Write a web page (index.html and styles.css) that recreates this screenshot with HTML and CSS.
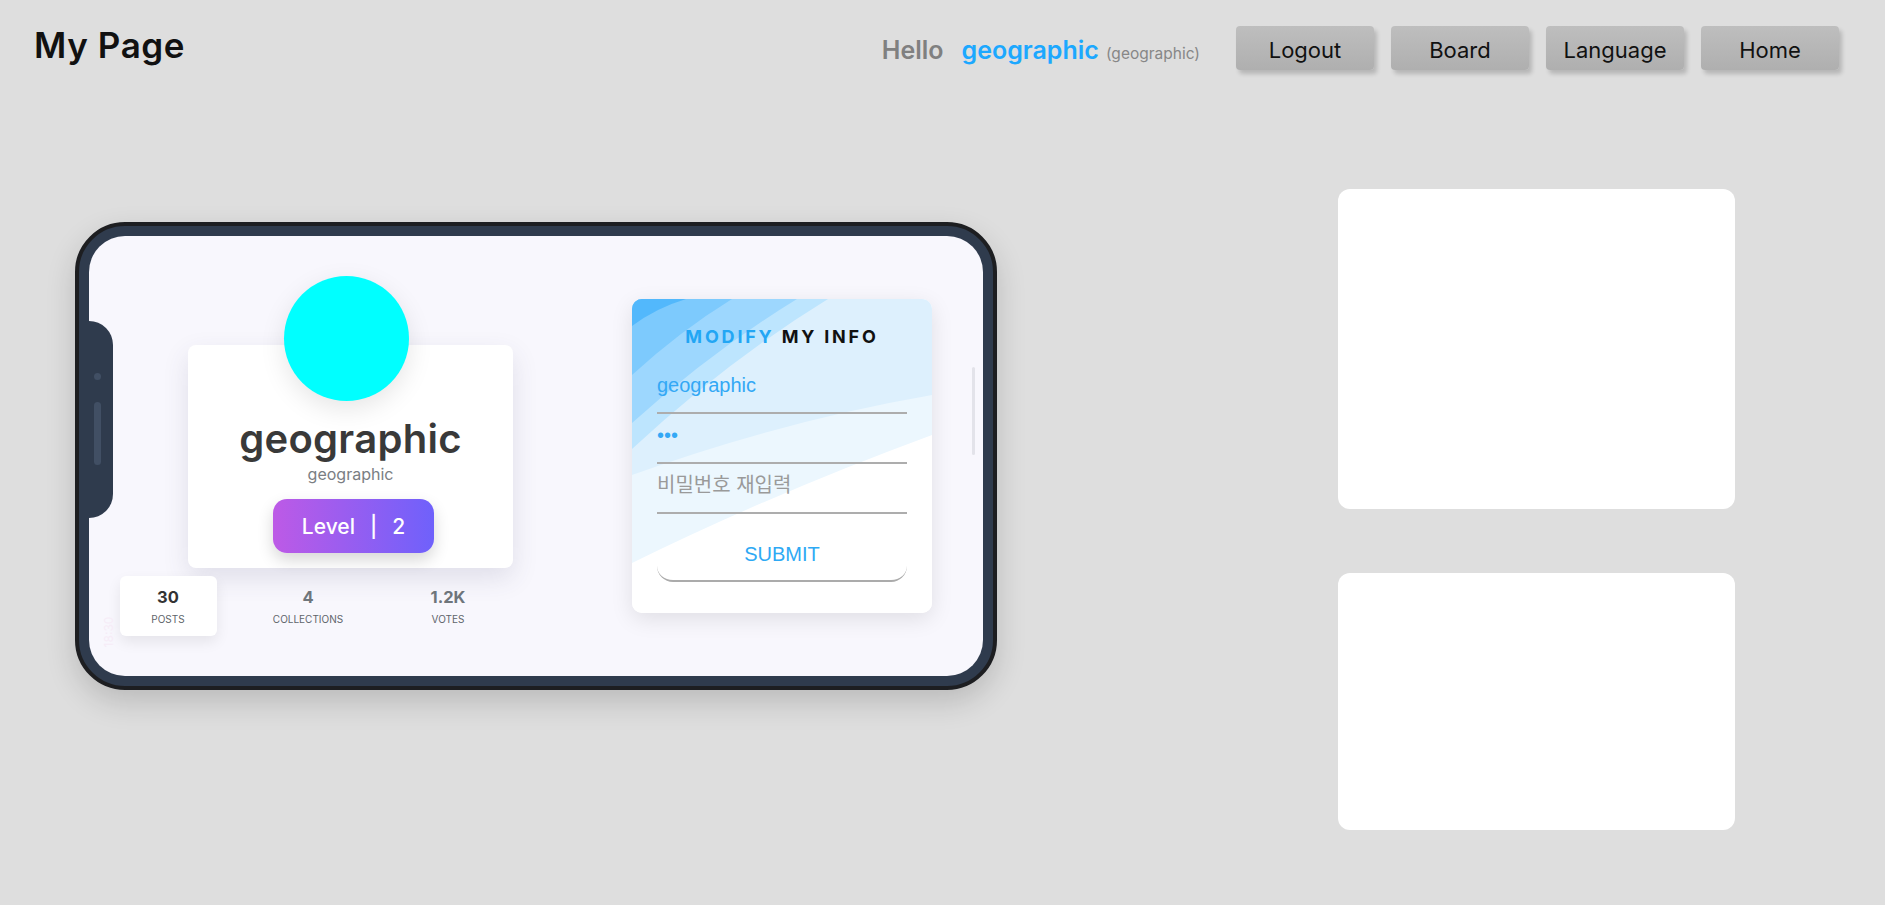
FILE: index.html
```html
<!DOCTYPE html>
<html lang="ko">
<head>
<meta charset="utf-8">
<title>My Page</title>
<link rel="stylesheet" href="styles.css">
</head>
<body>
<header class="topbar">
  <h1 class="page-title">My Page</h1>
  <div class="user-nav">
    <div class="greeting">
      <span class="hello">Hello</span>
      <span class="user-name">geographic</span>
      <span class="user-id">(geographic)</span>
    </div>
    <nav class="nav-buttons">
      <button class="nav-btn" type="button">Logout</button>
      <button class="nav-btn" type="button">Board</button>
      <button class="nav-btn" type="button">Language</button>
      <button class="nav-btn" type="button">Home</button>
    </nav>
  </div>
</header>
<main class="content">
  <section class="phone">
    <div class="screen">
      <div class="notch"><span class="notch-dot"></span><span class="notch-bar"></span></div>
      <span class="clock">18:30</span>
      <div class="profile-col">
        <div class="profile-card">
          <div class="avatar"></div>
          <div class="name">geographic</div>
          <div class="handle">geographic</div>
          <div class="level">Level<span class="sep">|</span>2</div>
        </div>
        <ul class="stats">
          <li class="stat active"><div class="stat-box"><span class="stat-num">30</span><span class="stat-label">Posts</span></div></li>
          <li class="stat"><div class="stat-box"><span class="stat-num">4</span><span class="stat-label">Collections</span></div></li>
          <li class="stat"><div class="stat-box"><span class="stat-num">1.2K</span><span class="stat-label">Votes</span></div></li>
        </ul>
      </div>
      <form class="modify-card">
        <svg class="waves" viewBox="0 0 300 314" preserveAspectRatio="none" aria-hidden="true">
          <rect width="300" height="314" fill="#ffffff"/>
          <path d="M0,264 Q140,195 300,136 L300,0 L0,0 Z" fill="#ecf7fe"/>
          <path d="M0,176 Q150,122 300,96 L300,0 L0,0 Z" fill="#ddf0fd"/>
          <path d="M0,150 Q95,62 196,0 L0,0 Z" fill="#bde5fe"/>
          <path d="M0,124 Q80,52 165,0 L0,0 Z" fill="#9dd7fe"/>
          <path d="M0,76 Q48,32 100,0 L0,0 Z" fill="#7dcafd"/>
          <path d="M0,27 Q24,9 54,0 L0,0 Z" fill="#52b8fc"/>
        </svg>
        <h2 class="modify-title"><span class="accent">MODIFY</span> MY INFO</h2>
        <input class="field field-first" type="text" value="geographic">
        <input class="field" type="password" value="abc">
        <input class="field" type="password" placeholder="비밀번호 재입력">
        <button class="submit" type="button">SUBMIT</button>
      </form>
      <div class="scrollbar"></div>
    </div>
  </section>
  <aside class="side-cards">
    <div class="side-card tall"></div>
    <div class="side-card short"></div>
  </aside>
</main>
</body>
</html>
```

FILE: styles.css
```css
* { box-sizing: border-box; }

body {
  margin: 0;
  background: #dedede;
  font-family: Inter, "Noto Sans", sans-serif;
  color: #111;
}

/* ---------- header ---------- */
.topbar {
  display: flex;
  align-items: center;
  height: 88px;
  padding: 26px 46px 18px 34px;
}

.page-title {
  margin: 0 0 7px;
  font-size: 35px;
  line-height: 42px;
  font-weight: 600;
  color: #111;
  letter-spacing: 0.6px;
}

.user-nav {
  margin-left: auto;
  display: flex;
  align-items: center;
}

.greeting {
  display: flex;
  align-items: baseline;
  margin: 4px 0 0 3px;
}

.hello {
  font-size: 25px;
  line-height: 30px;
  font-weight: 600;
  color: #808080;
  margin-right: 18px;
}

.user-name {
  font-size: 25px;
  line-height: 30px;
  font-weight: 600;
  color: #1ca8ff;
  margin-right: 7px;
}

.user-id {
  font-size: 15.5px;
  color: #878787;
}

.nav-buttons {
  display: flex;
  gap: 17px;
  margin-left: 36px;
}

.nav-btn {
  width: 138px;
  height: 44px;
  padding: 4px 0 0;
  border: 0;
  border-radius: 4px;
  background: linear-gradient(#bebebe, #afafaf);
  box-shadow: 3px 4px 4px rgba(0, 0, 0, 0.18);
  font-family: Inter, sans-serif;
  font-size: 22px;
  font-weight: 400;
  color: #111;
}

/* ---------- main ---------- */
.content {
  display: flex;
  justify-content: space-between;
  align-items: flex-start;
  padding: 0 150px 0 75px;
}

.phone {
  box-sizing: content-box;
  width: 894px;
  height: 440px;
  margin-top: 134px;
  padding: 10px;
  border: 4px solid #1d1e21;
  border-radius: 50px;
  background: #2f3b4d;
  box-shadow: 0 12px 30px rgba(0, 0, 0, 0.16);
}

.screen {
  position: relative;
  display: flex;
  align-items: flex-start;
  width: 100%;
  height: 100%;
  border-radius: 36px;
  background: #f8f7fd;
  overflow: hidden;
}

.notch {
  position: absolute;
  left: 0;
  top: 85px;
  width: 24px;
  height: 197px;
  border-radius: 0 26px 26px 0;
  background: #2f3b4d;
}

.notch-dot {
  position: absolute;
  left: 5px;
  top: 52px;
  width: 7px;
  height: 7px;
  border-radius: 50%;
  background: #414f64;
}

.notch-bar {
  position: absolute;
  left: 5px;
  top: 81px;
  width: 7px;
  height: 63px;
  border-radius: 4px;
  background: #414f64;
}

.clock {
  position: absolute;
  left: 19px;
  top: 396px;
  transform: translate(-50%, -50%) rotate(-90deg);
  font-size: 12px;
  color: #f6ecf7;
}

.scrollbar {
  position: absolute;
  left: 883px;
  top: 131px;
  width: 3px;
  height: 88px;
  border-radius: 2px;
  background: #e3e3ea;
}

/* profile */
.profile-col {
  display: flex;
  flex-direction: column;
  align-items: flex-start;
  margin-left: 9px;
  padding-top: 109px;
  width: 420px;
}

.profile-card {
  display: flex;
  flex-direction: column;
  align-items: center;
  width: 325px;
  height: 223px;
  margin-left: 90px;
  border-radius: 8px;
  background: #fff;
  box-shadow: 0 10px 26px rgba(60, 60, 100, 0.13);
}

.avatar {
  width: 125px;
  height: 125px;
  margin: -69px 0 0 -8px;
  border-radius: 50%;
  background: #00ffff;
  box-shadow: 0 8px 26px rgba(0, 0, 0, 0.1);
}

.name {
  margin-top: 14px;
  font-size: 40px;
  line-height: 48px;
  font-weight: 600;
  color: #393939;
  letter-spacing: 0.3px;
}

.handle {
  margin-top: 1px;
  font-size: 16px;
  line-height: 20px;
  color: #7a7e83;
}

.level {
  display: flex;
  align-items: center;
  justify-content: center;
  width: 161px;
  height: 54px;
  margin: 15px 0 0 6px;
  border-radius: 14px;
  background: linear-gradient(90deg, #bd5ae6, #6f61fb);
  box-shadow: 0 7px 16px rgba(0, 0, 0, 0.16);
  color: #fff;
  font-size: 21px;
  font-weight: 500;
}

.sep { margin: 0 15px; }

.stats {
  display: flex;
  margin: 8px 0 0;
  padding: 0;
  list-style: none;
}

.stat {
  display: flex;
  justify-content: center;
  width: 140px;
}

.stat-box {
  display: flex;
  flex-direction: column;
  align-items: center;
  width: 97px;
  height: 60px;
  padding-top: 10px;
  border-radius: 6px;
}

.stat.active .stat-box {
  background: #fff;
  box-shadow: 0 6px 14px rgba(0, 0, 0, 0.08);
}

.stat-num {
  font-size: 16.5px;
  line-height: 22px;
  font-weight: 700;
  color: #6e757b;
}

.stat.active .stat-num { color: #333; }

.stat-label {
  margin-top: 4px;
  font-size: 10px;
  line-height: 14px;
  text-transform: uppercase;
  color: #5f656b;
}

/* modify card */
.modify-card {
  position: relative;
  display: flex;
  flex-direction: column;
  width: 300px;
  height: 314px;
  margin: 63px 0 0 114px;
  padding: 26px 25px 0;
  border-radius: 10px;
  background: #fff;
  overflow: hidden;
  box-shadow: 0 6px 22px rgba(0, 0, 0, 0.1);
}

.waves {
  position: absolute;
  left: 0;
  top: 0;
  width: 100%;
  height: 100%;
}

.modify-title {
  position: relative;
  margin: 0;
  font-size: 18px;
  line-height: 24px;
  font-weight: 700;
  letter-spacing: 2.8px;
  text-align: center;
  color: #111;
}

.accent { color: #22a6f4; }

.field {
  position: relative;
  display: block;
  width: 250px;
  height: 50px;
  margin: 0;
  padding: 0 0 6px;
  border: 0;
  border-bottom: 2px solid #adadad;
  background: transparent;
  outline: none;
  font-family: "Liberation Sans", "Noto Sans CJK KR", sans-serif;
  font-size: 20px;
  color: #33a8f5;
}

.field-first { margin-top: 15px; }

.field::placeholder { color: #9a9a9a; }

.submit {
  position: relative;
  width: 250px;
  height: 53px;
  margin-top: 15px;
  padding: 0;
  border: 0;
  border-bottom: 2px solid #ababab;
  border-radius: 0 0 16px 16px;
  background: transparent;
  font-family: "Liberation Sans", sans-serif;
  font-size: 20px;
  color: #2ea9f4;
}

/* side cards */
.side-cards {
  display: flex;
  flex-direction: column;
  gap: 64px;
  width: 397px;
  margin-top: 101px;
}

.side-card {
  border-radius: 12px;
  background: #fff;
}

.side-card.tall { height: 320px; }
.side-card.short { height: 257px; }
```
